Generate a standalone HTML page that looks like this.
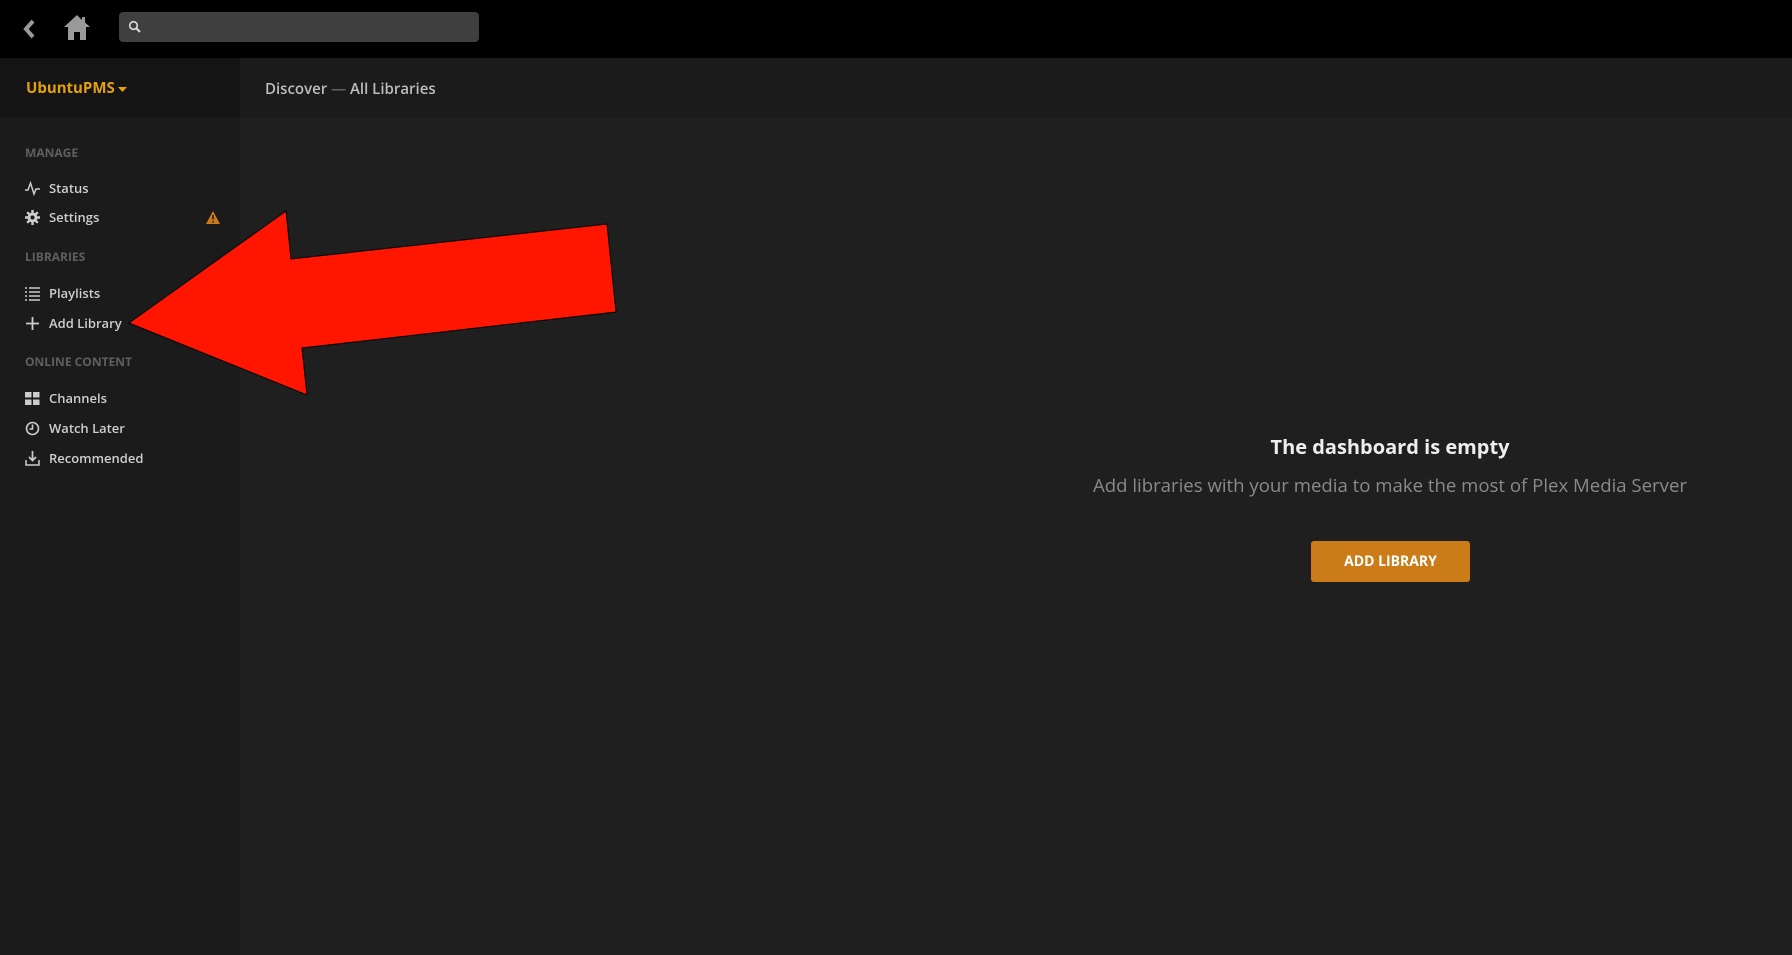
<!DOCTYPE html>
<html><head><meta charset="utf-8"><style>
*{margin:0;padding:0;box-sizing:border-box}
body{width:1792px;height:955px;background:#1f1f1f;font-family:"Open Sans","Liberation Sans",sans-serif;overflow:hidden;position:relative}
.top{position:absolute;left:0;top:0;width:1792px;height:58px;background:#000}
.search{position:absolute;left:119px;top:12px;width:360px;height:30px;background:#3f3f3f;border-radius:4px}
.sbhead{position:absolute;left:0;top:58px;width:240px;height:60px;background:#141414}
.hdr{position:absolute;left:240px;top:58px;width:1552px;height:60px;background:#1b1b1b}
.side{position:absolute;left:0;top:118px;width:240px;height:837px;background:#1b1b1b}
.t{position:absolute;white-space:nowrap;line-height:1}
.sec{font-size:12px;font-weight:bold;color:#5f5f5f;left:25px}
.it{font-size:13px;font-weight:600;color:#cfcfcf;left:49px}
.ic{position:absolute;left:25px;width:15px;height:15px}
</style></head><body>
<div class="top">
<svg style="position:absolute;left:20px;top:18px" width="18" height="22" viewBox="0 0 18 22"><path d="M13 3 L6 11 L13 19" stroke="#9a9a9a" stroke-width="4" fill="none"/></svg>
<svg style="position:absolute;left:63px;top:13px" width="28" height="28" viewBox="0 0 28 28"><path d="M14 2 L1 14 H5 V27 H11 V19 H17 V27 H23 V14 H27 L22 9.5 V4 H19 V7 Z" fill="#9a9a9a"/></svg>
<div class="search"><svg style="position:absolute;left:9px;top:8px" width="14" height="14" viewBox="0 0 14 14"><circle cx="5.5" cy="5.5" r="3.8" stroke="#ddd" stroke-width="1.6" fill="none"/><path d="M8.3 8.3 L12 12" stroke="#ddd" stroke-width="2"/></svg></div>
</div>
<div class="sbhead"><span class="t" style="left:26px;top:23px;font-size:15px;font-weight:bold;color:#e5a00d">UbuntuPMS</span>
<svg style="position:absolute;left:118px;top:29px" width="9" height="6"><path d="M0 0H9L4.5 5Z" fill="#e5a00d"/></svg></div>
<div class="hdr"><span class="t" style="left:25px;top:24px;font-size:15px;font-weight:600;color:#bdbdbd">Discover <span style="color:#666">—</span> All Libraries</span></div>
<div class="side"></div>

<span class="t sec" style="top:147px">MANAGE</span>
<svg class="ic" style="top:181px" viewBox="0 0 15 15"><path d="M0 9 H3 L5.5 2 L9 13 L11 8 H15" stroke="#ccc" stroke-width="1.5" fill="none"/></svg>
<span class="t it" style="top:182px">Status</span>
<svg class="ic" style="top:210px" viewBox="0 0 15 15"><circle cx="7.5" cy="7.5" r="5" fill="#ccc"/><g stroke="#ccc" stroke-width="2.4"><path d="M7.5 0V15M0 7.5H15M2.2 2.2L12.8 12.8M12.8 2.2L2.2 12.8"/></g><circle cx="7.5" cy="7.5" r="2" fill="#1b1b1b"/></svg>
<span class="t it" style="top:211px">Settings</span>
<svg style="position:absolute;left:206px;top:211px" width="14" height="13" viewBox="0 0 14 13"><path d="M7 0L14 13H0Z" fill="#cc7b19"/><path d="M7 4V8.5M7 10V11.5" stroke="#1b1b1b" stroke-width="1.6"/></svg>
<span class="t sec" style="top:251px">LIBRARIES</span>
<svg class="ic" style="top:286px" viewBox="0 0 15 15"><g stroke="#ccc" stroke-width="1.5"><path d="M0 2H2M0 6H2M0 10H2M0 14H2M4 2H15M4 6H15M4 10H15M4 14H15"/></g></svg>
<span class="t it" style="top:287px">Playlists</span>
<svg class="ic" style="top:316px" viewBox="0 0 15 15"><path d="M7.5 1V14M1 7.5H14" stroke="#ccc" stroke-width="1.8"/></svg>
<span class="t it" style="top:317px">Add Library</span>
<span class="t sec" style="top:356px">ONLINE CONTENT</span>
<svg class="ic" style="top:391px" viewBox="0 0 15 15"><g fill="#ccc"><rect x="0" y="1" width="6.5" height="5.5"/><rect x="8" y="1" width="6.5" height="5.5"/><rect x="0" y="8.5" width="6.5" height="5.5"/><rect x="8" y="8.5" width="6.5" height="5.5"/></g></svg>
<span class="t it" style="top:392px">Channels</span>
<svg class="ic" style="top:421px" viewBox="0 0 15 15"><circle cx="7.5" cy="7.5" r="6" stroke="#ccc" stroke-width="1.6" fill="none"/><path d="M7.5 3.5V8H4.5" stroke="#ccc" stroke-width="1.6" fill="none"/></svg>
<span class="t it" style="top:422px">Watch Later</span>
<svg class="ic" style="top:451px" viewBox="0 0 15 15"><path d="M7.5 0V9M4 6L7.5 9.5L11 6" stroke="#ccc" stroke-width="1.7" fill="none"/><path d="M1 9V14H14V9" stroke="#ccc" stroke-width="1.5" fill="none"/></svg>
<span class="t it" style="top:452px">Recommended</span>

<svg style="position:absolute;left:0;top:0" width="1792" height="955"><polygon points="129,323 286,211 291,259 607,224 616,312 302,348 307,395" fill="#ff1500" stroke="#000" stroke-width="1"/></svg>

<div class="t" style="left:1040px;width:700px;text-align:center;top:437px;font-size:20px;font-weight:bold;color:#eee">The dashboard is empty</div>
<div class="t" style="left:1040px;width:700px;text-align:center;top:477px;font-size:18.6px;color:#8a8a8a">Add libraries with your media to make the most of Plex Media Server</div>
<div style="position:absolute;left:1311px;top:541px;width:159px;height:41px;background:#cc7b19;border-radius:3px;color:#fff;font-size:14px;font-weight:bold;text-align:center;line-height:41px">ADD LIBRARY</div>
</body></html>
